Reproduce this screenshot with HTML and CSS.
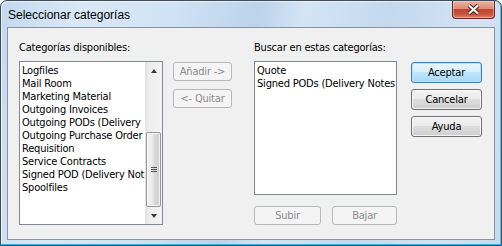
FILE: index.html
```html
<!DOCTYPE html>
<html lang="es">

<head>
  <meta charset="UTF-8">
  <title>Seleccionar categorías</title>
  <link rel="stylesheet" href="styles.css">
</head>

<body>
  <div class="window">
    <div class="titlebar">
      <span class="title">Seleccionar categorías</span>
      <button class="close" title="Cerrar">
        <svg width="15" height="11" viewBox="0 0 15 11">
          <path d="M3 1.5 L12 9.5 M12 1.5 L3 9.5" stroke="#4a2620" stroke-width="4.2" fill="none" />
          <path d="M3 1.5 L12 9.5 M12 1.5 L3 9.5" stroke="#f4f4f4" stroke-width="2.2" fill="none" />
        </svg>
      </button>
    </div>

    <div class="client">
      <div class="col col-left">
        <div class="label">Categorías disponibles:</div>
        <div class="listbox list-left">
          <!-- the list is narrower than some names, only the visible part is shown -->
          <ul class="items">
            <li>Logfiles</li>
            <li>Mail Room</li>
            <li>Marketing Material</li>
            <li>Outgoing Invoices</li>
            <li>Outgoing PODs (Delivery</li>
            <li>Outgoing Purchase Order</li>
            <li>Requisition</li>
            <li>Service Contracts</li>
            <li>Signed POD (Delivery Not</li>
            <li>Spoolfiles</li>
          </ul>
          <div class="scrollbar">
            <div class="arrow arrow-up"></div>
            <div class="track">
              <div class="thumb"><span class="grip"></span></div>
            </div>
            <div class="arrow arrow-down"></div>
          </div>
        </div>
      </div>

      <div class="col col-mid">
        <button class="btn btn-small" disabled>Añadir -&gt;</button>
        <button class="btn btn-small" disabled>&lt;- Quitar</button>
      </div>

      <div class="col col-right">
        <div class="label">Buscar en estas categorías:</div>
        <div class="listbox list-right">
          <ul class="items">
            <li>Quote</li>
            <li>Signed PODs (Delivery Notes</li>
          </ul>
        </div>
        <div class="btn-row">
          <button class="btn btn-small btn-up" disabled>Subir</button>
          <button class="btn btn-small btn-down" disabled>Bajar</button>
        </div>
      </div>

      <div class="col col-actions">
        <button class="btn btn-default">Aceptar</button>
        <button class="btn">Cancelar</button>
        <button class="btn">Ayuda</button>
      </div>
    </div>
  </div>
</body>

</html>
```

FILE: styles.css
```css
* {
  box-sizing: border-box;
}

body {
  margin: 0;
  font-family: "DejaVu Sans Condensed", "Liberation Sans", sans-serif;
  font-size: 11px;
  letter-spacing: -0.2px;
  color: #000;
}

.window {
  width: 502px;
  height: 246px;
  border: 1px solid #3e4b58;
  border-radius: 7px 7px 0 0;
  padding: 0 6px 5px 6px;
  display: flex;
  flex-direction: column;
  background: linear-gradient(100deg, #c3d9ef 0%, #d9e8f6 15%, #d0e2f4 32%, #bcd3eb 48%, #d4e4f5 56%, #c4d9ee 72%, #d2e3f4 88%, #c6dbf0 100%);
  box-shadow: inset 0 -1px 0 #2eb2e8, inset -1px 0 0 #58c2ec, inset 1px 1px 0 rgba(255, 255, 255, 0.6);
}

.titlebar {
  height: 26px;
  display: flex;
  justify-content: space-between;
  align-items: flex-start;
}

.title {
  padding: 7px 0 0 1px;
  font-family: "Liberation Sans", sans-serif;
  font-size: 12px;
  letter-spacing: 0;
  line-height: 14px;
}

.close {
  width: 43px;
  height: 18px;
  padding: 0;
  border: 1px solid #5e2a22;
  border-top: none;
  border-radius: 0 0 4px 4px;
  display: flex;
  align-items: center;
  justify-content: center;
  background: linear-gradient(#ecb1a2, #dc8c78 45%, #c4452f 50%, #c7533c 78%, #dc8467);
  box-shadow: inset 0 0 0 1px rgba(255, 220, 210, 0.45);
}

.client {
  flex: 1;
  display: flex;
  padding: 13px 0 0 11px;
  background-color: #f0f0f0;
  border: 1px solid #8793a1;
}

.label {
  height: 13px;
  line-height: 13px;
  margin-bottom: 7px;
  white-space: nowrap;
}

.col-left {
  width: 144px;
}

.col-mid {
  width: 59px;
  margin-left: 10px;
  padding-top: 21px;
  display: flex;
  flex-direction: column;
  gap: 8px;
}

.col-right {
  width: 143px;
  margin-left: 22px;
}

.col-actions {
  width: 71px;
  margin-left: 14px;
  padding-top: 21px;
  display: flex;
  flex-direction: column;
  gap: 6px;
}

/* list boxes */
.listbox {
  display: flex;
  overflow: hidden;
  background-color: #fff;
  border: 1px solid #828790;
}

.list-left {
  height: 164px;
}

.list-right {
  height: 134px;
}

.items {
  flex: 1;
  min-width: 0;
  margin: 0;
  padding: 2px 0 0 2px;
  list-style: none;
}

.items li {
  line-height: 13px;
  white-space: nowrap;
  overflow: hidden;
}

/* scroll bar */
.scrollbar {
  width: 17px;
  display: flex;
  flex-direction: column;
  background: linear-gradient(to right, #e2e2e2, #eeeeee 25%, #f3f3f3);
}

.arrow {
  height: 17px;
  display: flex;
  align-items: center;
  justify-content: center;
}

.arrow::before {
  content: "";
  width: 0;
  height: 0;
  border-left: 3.5px solid transparent;
  border-right: 3.5px solid transparent;
}

.arrow-up::before {
  border-bottom: 4px solid #3b3b3b;
}

.arrow-down::before {
  border-top: 4px solid #3b3b3b;
}

.track {
  flex: 1;
  display: flex;
  flex-direction: column;
  justify-content: flex-end;
}

.thumb {
  height: 75px;
  margin: 0 1px;
  border: 1px solid #979797;
  border-radius: 2px;
  display: flex;
  align-items: center;
  justify-content: center;
  background: linear-gradient(to right, #f3f3f3, #e9e9e9 45%, #d9d9d9 55%, #d0d0d0);
  box-shadow: inset 0 0 0 1px rgba(255, 255, 255, 0.7);
}

.grip {
  width: 6px;
  height: 5px;
  background: repeating-linear-gradient(#555 0 1px, transparent 1px 2px);
}

/* buttons */
.btn {
  height: 21px;
  padding: 0;
  font: inherit;
  letter-spacing: inherit;
  color: #000;
  border: 1px solid #707070;
  border-radius: 3px;
  background: linear-gradient(#f2f2f2, #ebebeb 45%, #dddddd 50%, #cfcfcf);
  box-shadow: inset 0 0 0 1px rgba(255, 255, 255, 0.75);
}

.btn-small {
  height: 19px;
}

.btn-default {
  border-color: #3c7fb1;
  background: linear-gradient(#eaf6fd, #d9f0fc 45%, #bee6fd 50%, #a7d9f5);
  box-shadow: inset 0 0 0 1px #b6e1f8;
}

.btn:disabled {
  color: #8c8c8c;
  border-color: #b5b8ba;
  background: #f4f4f4;
  box-shadow: none;
}

.btn-row {
  display: flex;
  justify-content: space-between;
  margin-top: 11px;
}

.btn-up {
  width: 67px;
}

.btn-down {
  width: 65px;
}
```
